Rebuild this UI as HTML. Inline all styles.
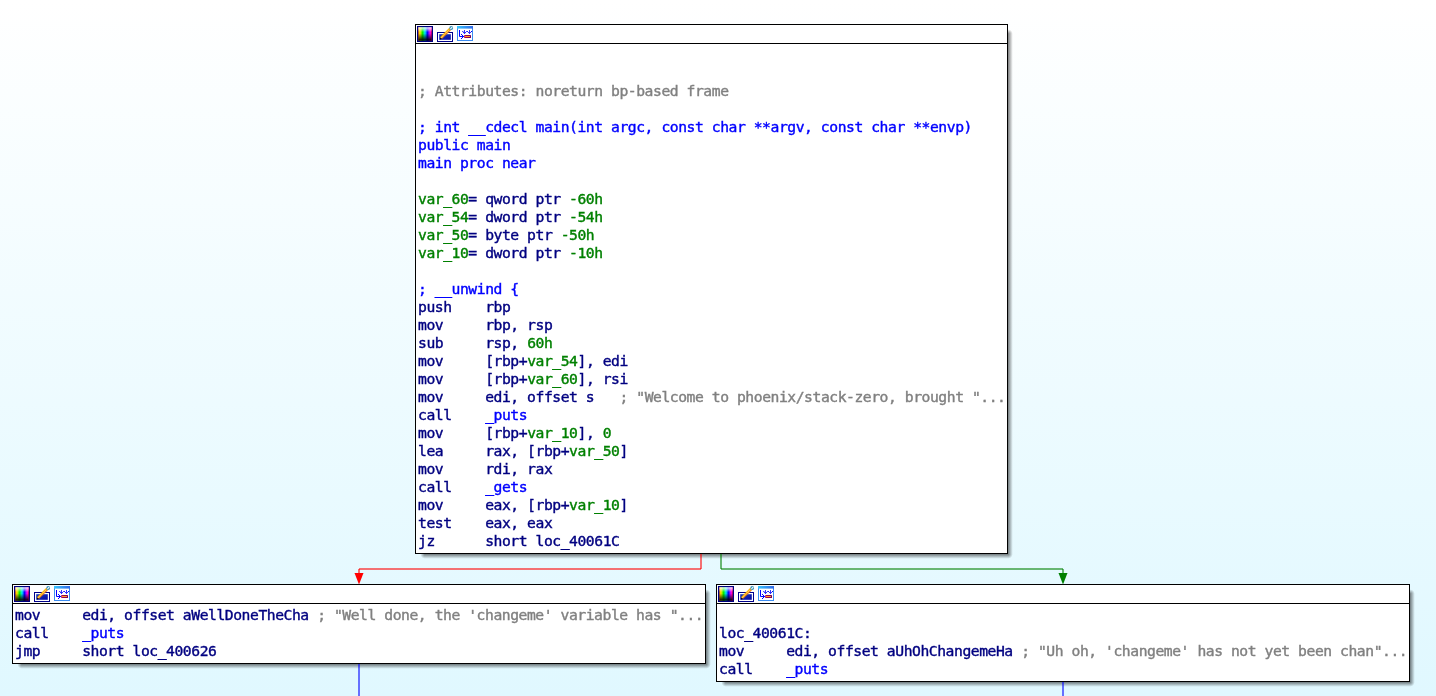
<!DOCTYPE html>
<html><head><meta charset="utf-8"><title>IDA graph view</title>
<style>
html,body{margin:0;padding:0}
body{width:1436px;height:696px;overflow:hidden;position:relative;background:linear-gradient(to bottom,#ffffff 0px,#e0f8ff 696px);}
.node{position:absolute;box-sizing:content-box;border:1px solid #000;background:#fff;}
.title{height:18px;border-bottom:1px solid #000;position:relative}
.title svg{position:absolute;left:1px;top:1px;display:block}
.code{will-change:transform;position:absolute;left:2px;top:21px;white-space:pre;font-family:"DejaVu Sans Mono","Liberation Mono",monospace;font-size:14.7px;letter-spacing:-0.45px;-webkit-text-stroke:0.4px currentColor;}
.l{height:18px;line-height:18px;white-space:pre}
.n{color:#000080}.b{color:#0000ff}.g{color:#008000}.c{color:#808080}
svg.edges{position:absolute;left:0;top:0}
.sr,.srt,.sb,.sbl,.sc{position:absolute}
.sr{right:-6px;top:9px;bottom:-1px;width:5px;background:linear-gradient(to right,rgba(0,0,0,.51) 0,rgba(0,0,0,0) 4.8px)}
.srt{right:-6px;top:4px;width:5px;height:5px;background:radial-gradient(circle at 0 100%,rgba(0,0,0,.51) 0,rgba(0,0,0,0) 4.8px)}
.sb{left:9px;right:-1px;bottom:-6px;height:5px;background:linear-gradient(to bottom,rgba(0,0,0,.51) 0,rgba(0,0,0,0) 4.8px)}
.sbl{left:4px;bottom:-6px;width:5px;height:5px;background:radial-gradient(circle at 100% 0,rgba(0,0,0,.51) 0,rgba(0,0,0,0) 4.8px)}
.sc{right:-6px;bottom:-6px;width:5px;height:5px;background:radial-gradient(circle at 0 0,rgba(0,0,0,.51) 0,rgba(0,0,0,0) 4.8px)}
</style></head><body>
<svg width="0" height="0" style="position:absolute"><defs><linearGradient id="hu" x1="0" y1="0" x2="1" y2="0"><stop offset="0" stop-color="#ff8000"/><stop offset=".12" stop-color="#ffee00"/><stop offset=".32" stop-color="#00ee00"/><stop offset=".5" stop-color="#00e8ff"/><stop offset=".68" stop-color="#0000ff"/><stop offset=".88" stop-color="#ff00ff"/><stop offset="1" stop-color="#ff0060"/></linearGradient><linearGradient id="wb" x1="0" y1="0" x2="0" y2="1"><stop offset="0" stop-color="#fff" stop-opacity="1"/><stop offset=".07" stop-color="#fff" stop-opacity=".75"/><stop offset=".36" stop-color="#fff" stop-opacity="0"/><stop offset=".45" stop-color="#000" stop-opacity="0"/><stop offset=".93" stop-color="#000" stop-opacity=".88"/><stop offset="1" stop-color="#000" stop-opacity="1"/></linearGradient><linearGradient id="bl" x1="0" y1="0" x2="1" y2="1"><stop offset="0" stop-color="#1838c0"/><stop offset="1" stop-color="#0808a0"/></linearGradient><linearGradient id="tb" x1="0" y1="0" x2="1" y2="0"><stop offset="0" stop-color="#38c8ff"/><stop offset="1" stop-color="#3068e8"/></linearGradient><linearGradient id="rb" x1="0" y1="0" x2="1" y2="0"><stop offset="0" stop-color="#b40050"/><stop offset="1" stop-color="#680060"/></linearGradient></defs></svg>
<div class="node" style="left:415px;top:24px;width:591px;height:528px"><div class="title"><svg width="56" height="16" viewBox="0 0 56 16">
<rect x="0" y="0" width="16" height="16" fill="#000080"/><rect x="1.3" y="1.3" width="13.4" height="13.4" fill="url(#hu)"/><rect x="1.3" y="1.3" width="13.4" height="13.4" fill="url(#wb)"/>
<rect x="20.5" y="6.5" width="15" height="9" fill="#fff" stroke="#00008b"/><rect x="22.2" y="8.2" width="11.6" height="5.6" fill="url(#bl)"/><path d="M24 12.2L33.2 3" stroke="#ee7a00" stroke-width="2.5" fill="none"/><path d="M23.6 11.6L32.8 2.4" stroke="#ffc000" stroke-width="1.3" fill="none"/><path d="M24.4 11.9L33 3.3" stroke="#fff" stroke-width=".8" stroke-dasharray="1 .7" fill="none"/><path d="M23 13.4L23.3 11.5L24.9 13.1Z" fill="#000"/><circle cx="34.2" cy="2" r="1.9" fill="#2f8fb8"/><path d="M33.7 2.6L34.9 1.4" stroke="#fff" stroke-width="1.1" stroke-linecap="round"/>
<rect x="40.5" y=".5" width="15" height="14" fill="#fff" stroke="#3c8cf0"/><rect x="40" y="0" width="16" height="2.6" fill="url(#tb)"/><g stroke="#0000ff" stroke-width=".9" fill="none"><path d="M42.5 4V10.5H46" stroke-width="1"/><path d="M44 8.5H45M45 9.5H46M45 11.5H46M44 12.5H45M46 10.5H47" stroke-width="1"/><path d="M45.3 5.5H46.3M49.3 5.5H50.9M54 5.5H55" stroke-width="1"/><path d="M46.2 6L47.5 7.6L48.8 6M51.2 6L52.5 7.6L53.8 6"/><path d="M47.5 4V7.4M52.5 4V7.4" stroke-width=".8"/></g><rect x="47.2" y="9" width="6.8" height="3" rx=".6" fill="url(#rb)"/><rect x="48" y="10" width="5" height="1" fill="#ffa020"/>
</svg>
</div><div class="code"><div class="l">&nbsp;</div><div class="l">&nbsp;</div><div class="l"><span class="c">; Attributes: noreturn bp-based frame</span></div><div class="l">&nbsp;</div><div class="l"><span class="b">; int __cdecl main(int argc, const char **argv, const char **envp)</span></div><div class="l"><span class="b">public main</span></div><div class="l"><span class="b">main proc near</span></div><div class="l">&nbsp;</div><div class="l"><span class="g">var_60</span><span class="n">= qword ptr </span><span class="g">-60h</span></div><div class="l"><span class="g">var_54</span><span class="n">= dword ptr </span><span class="g">-54h</span></div><div class="l"><span class="g">var_50</span><span class="n">= byte ptr </span><span class="g">-50h</span></div><div class="l"><span class="g">var_10</span><span class="n">= dword ptr </span><span class="g">-10h</span></div><div class="l">&nbsp;</div><div class="l"><span class="b">; __unwind {</span></div><div class="l"><span class="n">push    </span><span class="n">rbp</span></div><div class="l"><span class="n">mov     </span><span class="n">rbp, rsp</span></div><div class="l"><span class="n">sub     </span><span class="n">rsp, </span><span class="g">60h</span></div><div class="l"><span class="n">mov     </span><span class="n">[rbp+</span><span class="g">var_54</span><span class="n">], edi</span></div><div class="l"><span class="n">mov     </span><span class="n">[rbp+</span><span class="g">var_60</span><span class="n">], rsi</span></div><div class="l"><span class="n">mov     </span><span class="n">edi, offset s   </span><span class="c">; "Welcome to phoenix/stack-zero, brought "...</span></div><div class="l"><span class="n">call    </span><span class="b">_puts</span></div><div class="l"><span class="n">mov     </span><span class="n">[rbp+</span><span class="g">var_10</span><span class="n">], </span><span class="g">0</span></div><div class="l"><span class="n">lea     </span><span class="n">rax, [rbp+</span><span class="g">var_50</span><span class="n">]</span></div><div class="l"><span class="n">mov     </span><span class="n">rdi, rax</span></div><div class="l"><span class="n">call    </span><span class="b">_gets</span></div><div class="l"><span class="n">mov     </span><span class="n">eax, [rbp+</span><span class="g">var_10</span><span class="n">]</span></div><div class="l"><span class="n">test    </span><span class="n">eax, eax</span></div><div class="l"><span class="n">jz      </span><span class="n">short loc_40061C</span></div></div><div class="sr"></div><div class="srt"></div><div class="sb"></div><div class="sbl"></div><div class="sc"></div></div>
<div class="node" style="left:12px;top:584px;width:692px;height:78px"><div class="title"><svg width="56" height="16" viewBox="0 0 56 16">
<rect x="0" y="0" width="16" height="16" fill="#000080"/><rect x="1.3" y="1.3" width="13.4" height="13.4" fill="url(#hu)"/><rect x="1.3" y="1.3" width="13.4" height="13.4" fill="url(#wb)"/>
<rect x="20.5" y="6.5" width="15" height="9" fill="#fff" stroke="#00008b"/><rect x="22.2" y="8.2" width="11.6" height="5.6" fill="url(#bl)"/><path d="M24 12.2L33.2 3" stroke="#ee7a00" stroke-width="2.5" fill="none"/><path d="M23.6 11.6L32.8 2.4" stroke="#ffc000" stroke-width="1.3" fill="none"/><path d="M24.4 11.9L33 3.3" stroke="#fff" stroke-width=".8" stroke-dasharray="1 .7" fill="none"/><path d="M23 13.4L23.3 11.5L24.9 13.1Z" fill="#000"/><circle cx="34.2" cy="2" r="1.9" fill="#2f8fb8"/><path d="M33.7 2.6L34.9 1.4" stroke="#fff" stroke-width="1.1" stroke-linecap="round"/>
<rect x="40.5" y=".5" width="15" height="14" fill="#fff" stroke="#3c8cf0"/><rect x="40" y="0" width="16" height="2.6" fill="url(#tb)"/><g stroke="#0000ff" stroke-width=".9" fill="none"><path d="M42.5 4V10.5H46" stroke-width="1"/><path d="M44 8.5H45M45 9.5H46M45 11.5H46M44 12.5H45M46 10.5H47" stroke-width="1"/><path d="M45.3 5.5H46.3M49.3 5.5H50.9M54 5.5H55" stroke-width="1"/><path d="M46.2 6L47.5 7.6L48.8 6M51.2 6L52.5 7.6L53.8 6"/><path d="M47.5 4V7.4M52.5 4V7.4" stroke-width=".8"/></g><rect x="47.2" y="9" width="6.8" height="3" rx=".6" fill="url(#rb)"/><rect x="48" y="10" width="5" height="1" fill="#ffa020"/>
</svg>
</div><div class="code"><div class="l"><span class="n">mov     </span><span class="n">edi, offset aWellDoneTheCha </span><span class="c">; "Well done, the 'changeme' variable has "...</span></div><div class="l"><span class="n">call    </span><span class="b">_puts</span></div><div class="l"><span class="n">jmp     </span><span class="n">short loc_400626</span></div></div><div class="sr"></div><div class="srt"></div><div class="sb"></div><div class="sbl"></div><div class="sc"></div></div>
<div class="node" style="left:716px;top:584px;width:692px;height:96px"><div class="title"><svg width="56" height="16" viewBox="0 0 56 16">
<rect x="0" y="0" width="16" height="16" fill="#000080"/><rect x="1.3" y="1.3" width="13.4" height="13.4" fill="url(#hu)"/><rect x="1.3" y="1.3" width="13.4" height="13.4" fill="url(#wb)"/>
<rect x="20.5" y="6.5" width="15" height="9" fill="#fff" stroke="#00008b"/><rect x="22.2" y="8.2" width="11.6" height="5.6" fill="url(#bl)"/><path d="M24 12.2L33.2 3" stroke="#ee7a00" stroke-width="2.5" fill="none"/><path d="M23.6 11.6L32.8 2.4" stroke="#ffc000" stroke-width="1.3" fill="none"/><path d="M24.4 11.9L33 3.3" stroke="#fff" stroke-width=".8" stroke-dasharray="1 .7" fill="none"/><path d="M23 13.4L23.3 11.5L24.9 13.1Z" fill="#000"/><circle cx="34.2" cy="2" r="1.9" fill="#2f8fb8"/><path d="M33.7 2.6L34.9 1.4" stroke="#fff" stroke-width="1.1" stroke-linecap="round"/>
<rect x="40.5" y=".5" width="15" height="14" fill="#fff" stroke="#3c8cf0"/><rect x="40" y="0" width="16" height="2.6" fill="url(#tb)"/><g stroke="#0000ff" stroke-width=".9" fill="none"><path d="M42.5 4V10.5H46" stroke-width="1"/><path d="M44 8.5H45M45 9.5H46M45 11.5H46M44 12.5H45M46 10.5H47" stroke-width="1"/><path d="M45.3 5.5H46.3M49.3 5.5H50.9M54 5.5H55" stroke-width="1"/><path d="M46.2 6L47.5 7.6L48.8 6M51.2 6L52.5 7.6L53.8 6"/><path d="M47.5 4V7.4M52.5 4V7.4" stroke-width=".8"/></g><rect x="47.2" y="9" width="6.8" height="3" rx=".6" fill="url(#rb)"/><rect x="48" y="10" width="5" height="1" fill="#ffa020"/>
</svg>
</div><div class="code"><div class="l">&nbsp;</div><div class="l"><span class="n">loc_40061C:</span></div><div class="l"><span class="n">mov     </span><span class="n">edi, offset aUhOhChangemeHa </span><span class="c">; "Uh oh, 'changeme' has not yet been chan"...</span></div><div class="l"><span class="n">call    </span><span class="b">_puts</span></div></div><div class="sr"></div><div class="srt"></div><div class="sb"></div><div class="sbl"></div><div class="sc"></div></div>
<svg class="edges" width="1436" height="696" viewBox="0 0 1436 696" shape-rendering="crispEdges">
<g fill="#ff0000" fill-opacity=".55"><rect x="700" y="554" width="2" height="15"/><rect x="359" y="568" width="342" height="2"/><rect x="358" y="569" width="2" height="5"/></g>
<g fill="#008000" fill-opacity=".55"><rect x="720" y="554" width="2" height="15"/><rect x="721" y="568" width="342" height="2"/><rect x="1062" y="569" width="2" height="5"/></g>
<g fill="#0000ff" fill-opacity=".55"><rect x="358" y="664" width="2" height="32"/><rect x="1062" y="682" width="2" height="14"/></g>
<path d="M354.5 573H363.5L359 584.5Z" fill="#ff0000" shape-rendering="auto"/>
<path d="M1058.5 573H1067.5L1063 584.5Z" fill="#008000" shape-rendering="auto"/>
</svg>
</body></html>
